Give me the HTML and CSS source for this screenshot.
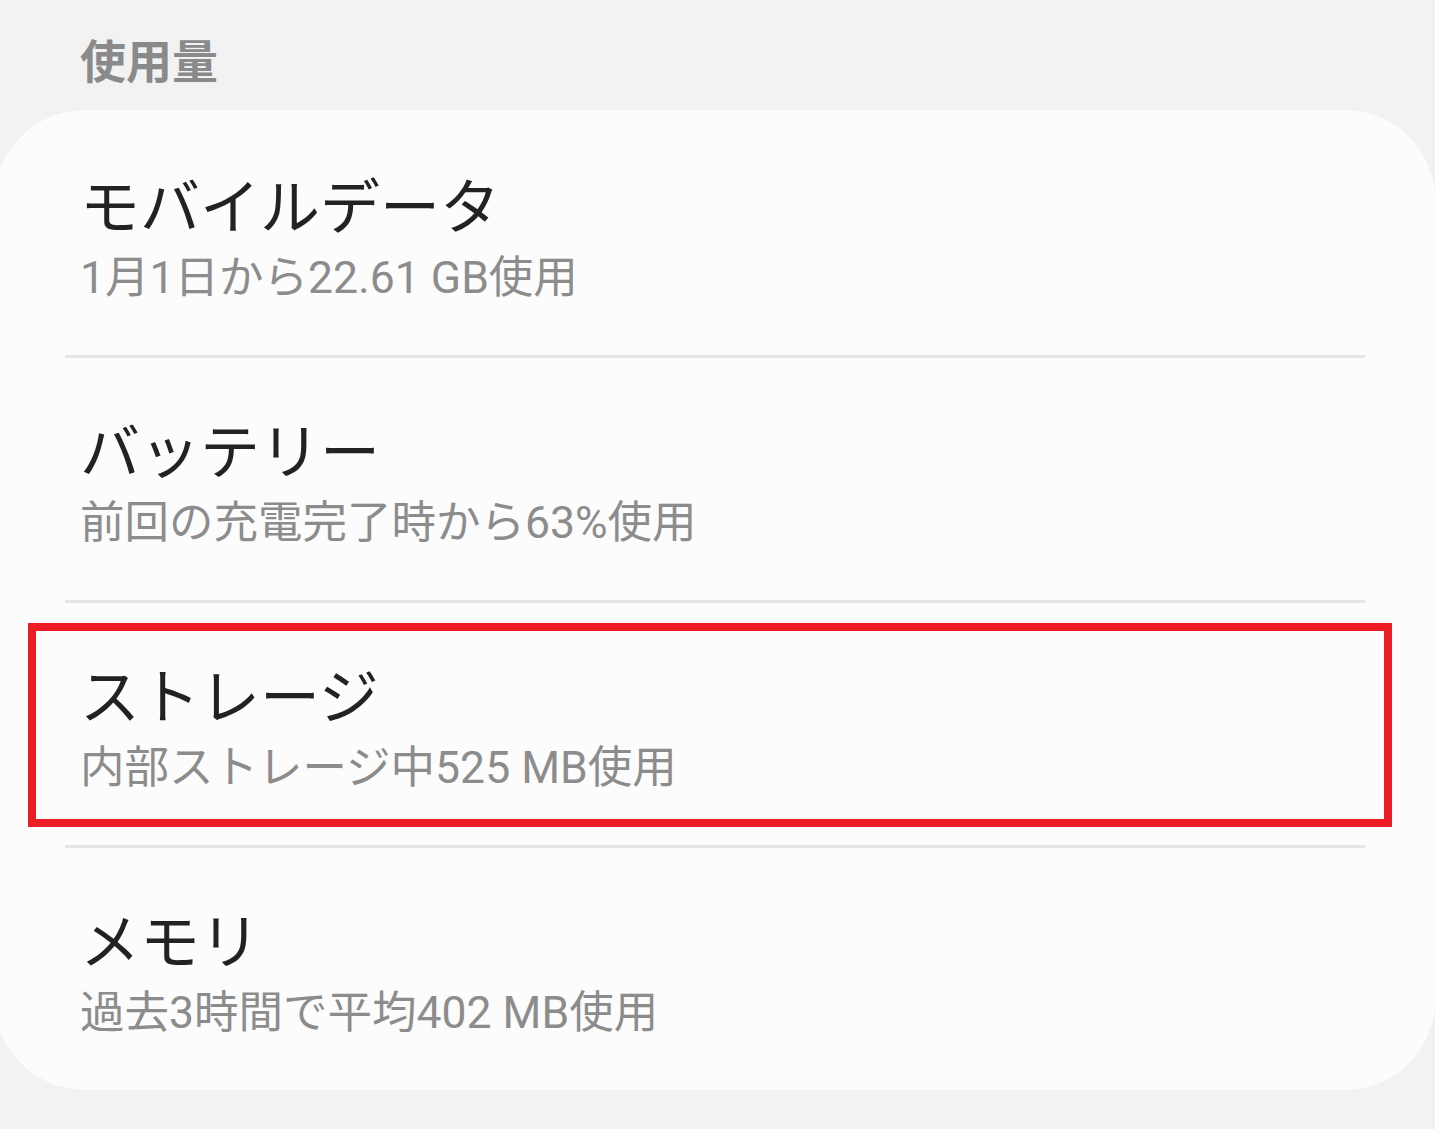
FILE: index.html
```html
<!DOCTYPE html>
<html lang="ja">
<head>
<meta charset="utf-8">
<title>使用量</title>
<link rel="stylesheet" href="styles.css">
</head>
<body>
<div class="page">
  <div class="section-header">使用量</div>
  <div class="card">
    <div class="item">
      <div class="title">モバイルデータ</div>
      <div class="sub">1月1日から22.61 GB使用</div>
    </div>
    <div class="divider"></div>
    <div class="item">
      <div class="title">バッテリー</div>
      <div class="sub">前回の充電完了時から63%使用</div>
    </div>
    <div class="divider"></div>
    <div class="item highlighted">
      <div class="title">ストレージ</div>
      <div class="sub">内部ストレージ中525 MB使用</div>
      <div class="highlight-box"></div>
    </div>
    <div class="divider"></div>
    <div class="item">
      <div class="title">メモリ</div>
      <div class="sub">過去3時間で平均402 MB使用</div>
    </div>
  </div>
</div>
</body>
</html>
```
FILE: styles.css
```css
html, body {
  margin: 0;
  padding: 0;
  background: #f2f2f2;
}
body {
  font-family: Roboto, "Noto Sans CJK JP", sans-serif;
  width: 1435px;
  height: 1129px;
  overflow: hidden;
}
.page {
  display: flex;
  flex-direction: column;
}
.section-header {
  height: 110px;
  box-sizing: border-box;
  padding: 24px 0 0 80px;
  font-family: "Noto Sans CJK JP", sans-serif;
  font-weight: 700;
  font-size: 46px;
  line-height: 68px;
  color: #8a8a8a;
}
.card {
  margin-left: -5px;
  width: 1440px;
  background: #fcfcfc;
  border-radius: 90px;
  padding-top: 3px;
  display: flex;
  flex-direction: column;
}
.item {
  position: relative;
  height: 242px;
  box-sizing: border-box;
  padding: 58px 0 0 85px;
  display: flex;
  flex-direction: column;
}
.title {
  font-size: 60px;
  line-height: 76px;
  color: #222222;
}
.sub {
  margin-top: 2px;
  font-size: 44.5px;
  line-height: 58px;
  color: #8c8c8c;
}
.divider {
  height: 3px;
  margin: 0 70px;
  background: #e6e6e6;
}
.highlight-box {
  position: absolute;
  left: 33px;
  right: 43px;
  top: 20px;
  bottom: 18px;
  border: 8px solid #ee1c25;
}
```
